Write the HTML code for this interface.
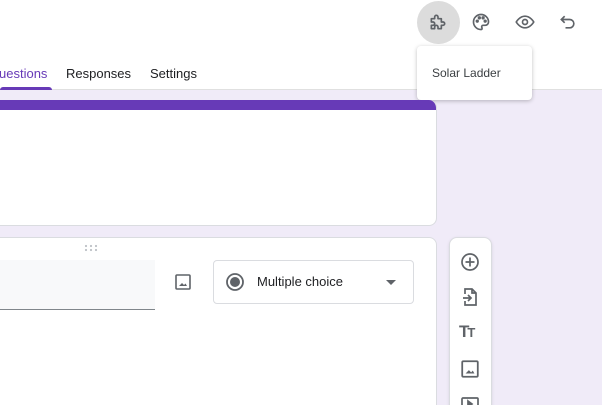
<!DOCTYPE html>
<html style="width:602px;height:405px;overflow:hidden"><head><style>
*{margin:0;padding:0;box-sizing:border-box}
body{width:602px;height:405px;overflow:hidden;background:#f0ebf8;font-family:"Liberation Sans",Arial,sans-serif;position:relative;color:#202124}
.hdr{position:absolute;left:0;top:0;width:602px;height:90px;background:#fff;border-bottom:1px solid #e0e0e0}
.tab{position:absolute;top:66px;font-size:13px;color:#202124}
.card{position:absolute;background:#fff;border:1px solid #dadce0;border-radius:0 8px 8px 0}
svg{position:absolute}
</style></head><body>
<div class="hdr"></div>
<div class="tab" style="left:-1px;color:#673ab7">uestions</div>
<div style="position:absolute;left:0;top:87px;width:52px;height:3px;background:#673ab7;border-radius:3px 3px 0 0"></div>
<div class="tab" style="left:66px">Responses</div>
<div class="tab" style="left:150px">Settings</div>

<div style="position:absolute;left:417px;top:1px;width:43px;height:43px;border-radius:50%;background:#dcdcdc"></div>
<svg style="left:428px;top:12px" width="20" height="20" viewBox="0 0 24 24" fill="none" stroke="#5f6368" stroke-width="2" stroke-linejoin="round"><path d="M4 8h4V6a2 2 0 0 1 4 0v2h4v4h2a2 2 0 0 1 0 4h-2v4h-4v-2a2 2 0 0 0-4 0v2H4v-4h2a2 2 0 0 0 0-4H4z"/></svg>
<svg style="left:471px;top:12px" width="20" height="20" viewBox="0 0 24 24" fill="none" stroke="#5f6368" stroke-width="2"><path d="M12 3a9 9 0 0 0 0 18c1.5 0 1.5-1.5 1-2.5s0-2.5 1.5-2.5H17a4 4 0 0 0 4-4c0-5-4-9-9-9z"/><circle cx="7.5" cy="11" r="1" fill="#5f6368"/><circle cx="10" cy="7" r="1" fill="#5f6368"/><circle cx="14.5" cy="7" r="1" fill="#5f6368"/><circle cx="17" cy="11" r="1" fill="#5f6368"/></svg>
<svg style="left:514px;top:12px" width="22" height="20" viewBox="0 0 24 24" fill="none" stroke="#5f6368" stroke-width="2"><path d="M1.5 12S5.5 5 12 5s10.5 7 10.5 7-4 7-10.5 7S1.5 12 1.5 12z"/><circle cx="12" cy="12" r="3"/></svg>
<svg style="left:558px;top:12px" width="20" height="20" viewBox="0 0 24 24" fill="none" stroke="#5f6368" stroke-width="2"><path d="M8 5L4 9l4 4M4 9h10a5 5 0 0 1 0 10H9"/></svg>

<div style="position:absolute;left:417px;top:46px;width:115px;height:54px;background:#fff;border-radius:4px;box-shadow:0 1px 4px rgba(0,0,0,.25)"></div>
<div style="position:absolute;left:432px;top:66px;font-size:12px;color:#3c4043">Solar Ladder</div>

<div class="card" style="left:-10px;top:100px;width:447px;height:126px;overflow:hidden;border-top:none"><div style="height:10px;background:#673ab7"></div></div>

<div class="card" style="left:-10px;top:237px;width:447px;height:180px"></div>
<svg style="left:84px;top:244px" width="14" height="8"><g fill="#bdc1c6"><circle cx="2" cy="2" r="1.1"/><circle cx="7" cy="2" r="1.1"/><circle cx="12" cy="2" r="1.1"/><circle cx="2" cy="6" r="1.1"/><circle cx="7" cy="6" r="1.1"/><circle cx="12" cy="6" r="1.1"/></g></svg>
<div style="position:absolute;left:0;top:260px;width:155px;height:50px;background:#f8f9fa;border-bottom:1px solid #80868b"></div>
<svg style="left:174px;top:273px" width="18" height="18" viewBox="0 0 18 18"><rect x="2" y="2" width="14" height="14" rx="1" fill="none" stroke="#5f6368" stroke-width="1.6"/><path d="M5 13l3-3 2 2 1.5-1.5L13 13z" fill="#5f6368"/></svg>
<div style="position:absolute;left:213px;top:260px;width:201px;height:44px;border:1px solid #dadce0;border-radius:4px;background:#fff"></div>
<svg style="left:225px;top:272px" width="20" height="20"><circle cx="10" cy="10" r="8" fill="none" stroke="#5f6368" stroke-width="1.8"/><circle cx="10" cy="10" r="5" fill="#5f6368"/></svg>
<div style="position:absolute;left:257px;top:274px;font-size:13px;color:#202124">Multiple choice</div>
<svg style="left:386px;top:280px" width="10" height="5"><path d="M0 0h10L5 5z" fill="#5f6368"/></svg>

<div style="position:absolute;left:449px;top:237px;width:43px;height:180px;background:#fff;border:1px solid #dadce0;border-radius:8px;box-shadow:0 1px 3px rgba(0,0,0,.1)"></div>
<svg style="left:460px;top:252px" width="20" height="20" viewBox="0 0 20 20" fill="none" stroke="#5f6368" stroke-width="1.7"><circle cx="10" cy="10" r="8"/><path d="M10 5.5v9M5.5 10h9"/></svg>
<svg style="left:460px;top:287px" width="20" height="20" viewBox="0 0 20 20" fill="none" stroke="#5f6368" stroke-width="1.7"><path d="M5 7V2h7l4 4v12H5v-4M12 2v4h4M3 11h8M8 8l3 3-3 3"/></svg>
<div style="position:absolute;left:459px;top:322px;font-size:17px;font-weight:bold;color:#5f6368;letter-spacing:-2px">T<span style="font-size:13px">T</span></div>
<svg style="left:460px;top:359px" width="20" height="20" viewBox="0 0 18 18"><rect x="2" y="2" width="14" height="14" rx="1" fill="none" stroke="#5f6368" stroke-width="1.6"/><path d="M5 13l3-3 2 2 1.5-1.5L13 13z" fill="#5f6368"/></svg>
<svg style="left:460px;top:396px" width="20" height="20" viewBox="0 0 20 20" fill="none" stroke="#5f6368" stroke-width="1.7"><rect x="2" y="2" width="16" height="14" rx="1"/><path d="M8 5l4 3-4 3z" fill="#5f6368"/></svg>
</body></html>
